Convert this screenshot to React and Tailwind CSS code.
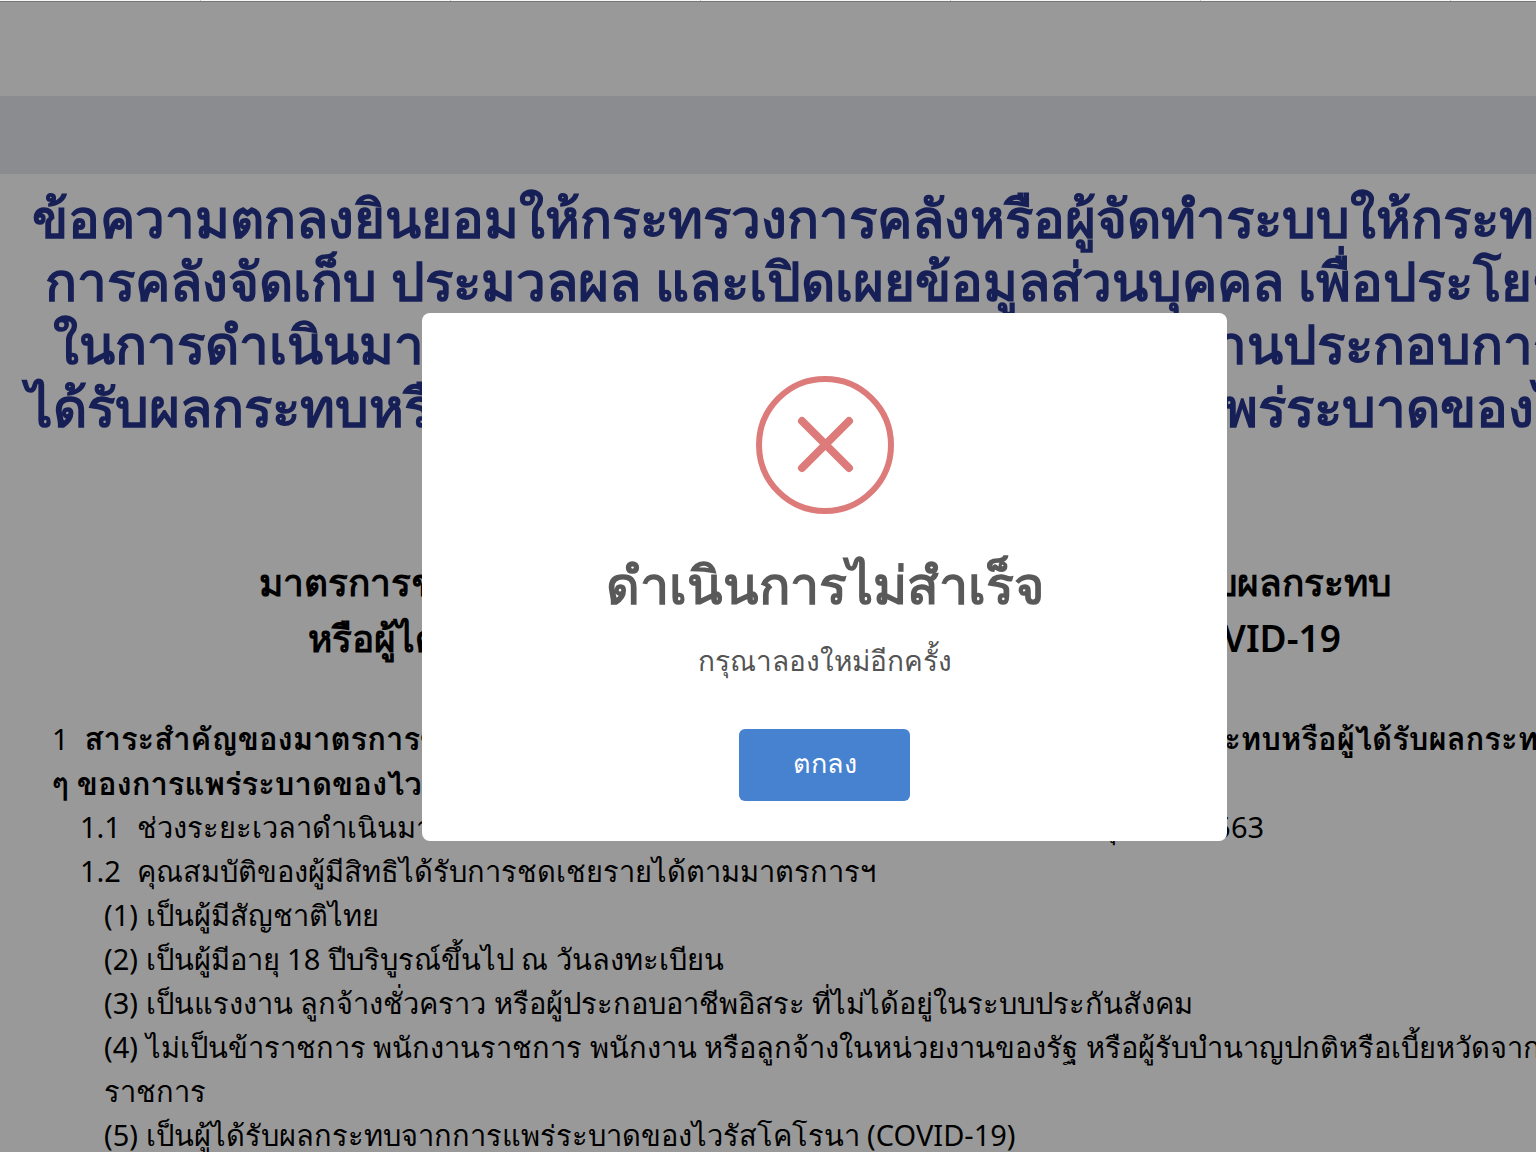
const headingLines = [
  'ข้อความตกลงยินยอมให้กระทรวงการคลังหรือผู้จัดทำระบบให้กระทรวง',
  'การคลังจัดเก็บ ประมวลผล และเปิดเผยข้อมูลส่วนบุคคล เพื่อประโยชน์',
  'ในการดำเนินมาตรการ ชดเชยรายได้ ลูกจ้างของสถานประกอบการที่',
  '\u00a0\u00a0ได้รับผลกระทบหรือผู้ได้รับผลกระทบด้านอื่นจากการแพร่ระบาดของไวรัส',
];

const conditions = [
  ['(1)', 'เป็นผู้มีสัญชาติไทย'],
  ['(2)', 'เป็นผู้มีอายุ 18 ปีบริบูรณ์ขึ้นไป ณ วันลงทะเบียน'],
  ['(3)', 'เป็นแรงงาน ลูกจ้างชั่วคราว หรือผู้ประกอบอาชีพอิสระ ที่ไม่ได้อยู่ในระบบประกันสังคม'],
  ['(4)', 'ไม่เป็นข้าราชการ พนักงานราชการ พนักงาน หรือลูกจ้างในหน่วยงานของรัฐ หรือผู้รับบำนาญปกติหรือเบี้ยหวัดจากส่วน', 'ราชการ'],
  ['(5)', 'เป็นผู้ได้รับผลกระทบจากการแพร่ระบาดของไวรัสโคโรนา (COVID-19)'],
];

function TabStripEdge() {
  return (
    <div className="flex h-0.5 shrink-0 border-b border-[#777777] bg-[#f8f8f8]">
      <div className="w-[201px] shrink-0 border-r border-[#cccccc]" />
      {[0, 1, 2, 3, 4].map((tab) => (
        <div key={tab} className="w-[250px] shrink-0 border-r border-[#cccccc]" />
      ))}
    </div>
  );
}

function Agreement() {
  return (
    <main className="flex flex-col whitespace-nowrap">
      <h1 className="flex flex-col items-center pt-3 text-[53px] leading-[63px] font-semibold text-[#26348f]">
        {headingLines.map((line) => (
          <span key={line}>{line}</span>
        ))}
      </h1>
      <h2 className="flex flex-col items-center pt-29 text-[37px] leading-14 font-semibold">
        <span>มาตรการชดเชยรายได้แก่ลูกจ้างของสถานประกอบการที่ได้รับผลกระทบ</span>
        <span>หรือผู้ได้รับผลกระทบด้านอื่น ๆ ของการแพร่ระบาดของ COVID-19</span>
      </h2>
      <section className="flex flex-col px-13 pt-[50px] text-[29px] leading-11">
        <h3 className="font-['Noto_Sans',Loma,sans-serif] text-[31px] leading-11 font-semibold">
          <span className="mr-4 text-[29px] font-normal">1</span>
          สาระสำคัญของมาตรการชดเชยรายได้ให้แก่ลูกจ้างของสถานประกอบการที่ได้รับผลกระทบหรือผู้ได้รับผลกระทบด้านอื่น
          <br />
          ๆ ของการแพร่ระบาดของไวรัสโคโรนา
        </h3>
        <div className="pl-7">
          <p><span className="mr-4">1.1</span>ช่วงระยะเวลาดำเนินมาตรการ เป็นระยะเวลา 3 เดือน ตั้งแต่เมษายน ถึงเดือนมิถุนายน 2563</p>
          <p><span className="mr-4">1.2</span>คุณสมบัติของผู้มีสิทธิได้รับการชดเชยรายได้ตามมาตรการฯ</p>
          <ul className="pl-6">
            {conditions.map(([number, text, rest]) => (
              <li key={number}>
                {number} {text}
                {rest && <span className="block">{rest}</span>}
              </li>
            ))}
          </ul>
        </div>
      </section>
    </main>
  );
}

function ErrorDialog() {
  return (
    <div
      role="alertdialog"
      aria-modal="true"
      aria-labelledby="dialog-title"
      aria-describedby="dialog-text"
      className="flex w-[805px] flex-col items-center rounded-lg bg-white pt-[63px] pb-10 text-[#545454]"
    >
      <svg className="size-[138px]" viewBox="0 0 138 138" fill="none" stroke="#dd7b7b" aria-hidden="true">
        <circle cx="69" cy="69" r="66" strokeWidth="6" />
        <path d="M46 45 93 92M93 45 46 92" strokeWidth="8" strokeLinecap="round" />
      </svg>
      <h2 id="dialog-title" className="mt-8 text-[52px] leading-[76px] font-bold text-[#595959]">ดำเนินการไม่สำเร็จ</h2>
      <p id="dialog-text" className="mt-4 text-[28px] leading-11">กรุณาลองใหม่อีกครั้ง</p>
      <button type="button" className="mt-[47px] h-[72px] w-[171px] rounded-md bg-[#4682d0] pb-1 text-[27px] text-white">ตกลง</button>
    </div>
  );
}

export default function App() {
  return (
    <div className="flex h-screen flex-col overflow-hidden bg-white font-['Noto_Sans',serif] text-black">
      <TabStripEdge />
      <div className="relative min-h-0 min-w-[1649px] flex-1 overflow-hidden">
        <header className="h-[94px] bg-white" />
        <div className="h-[78px] bg-[#e8e9ee]" />
        <Agreement />
        <div className="absolute inset-0 flex items-center justify-center bg-black/40">
          <ErrorDialog />
        </div>
      </div>
    </div>
  );
}
